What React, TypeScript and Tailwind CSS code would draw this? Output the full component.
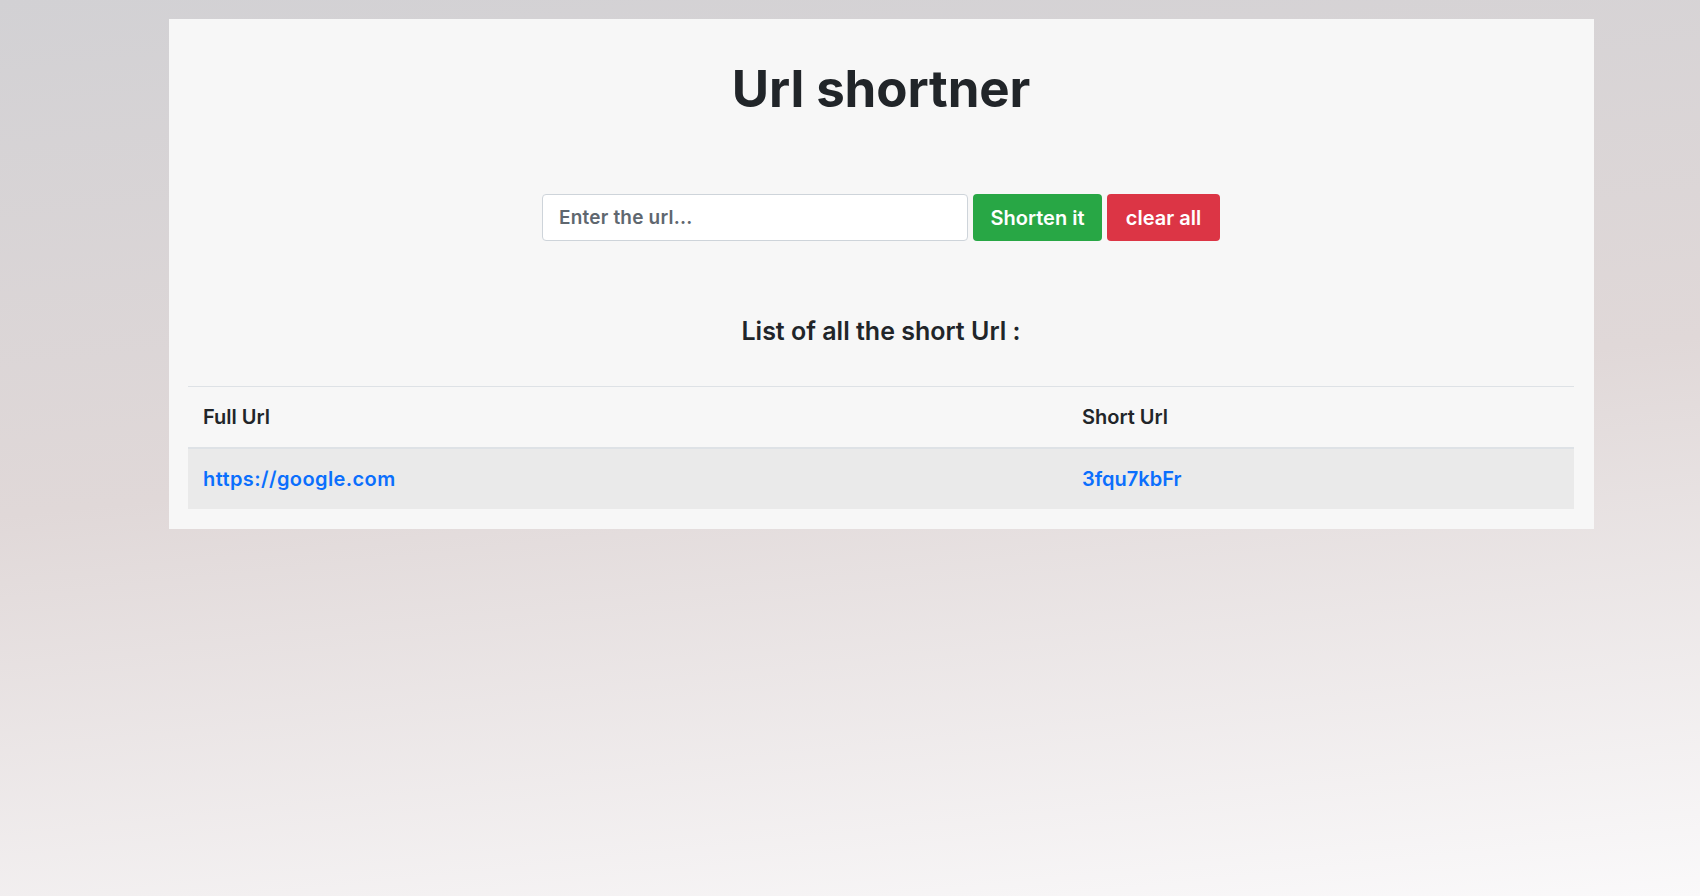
import { useState } from "react";

interface ShortUrl {
    full: string;
    short: string;
}

const initialUrls: ShortUrl[] = [{ full: "https://google.com", short: "3fqu7kbFr" }];

function App() {
    const [value, setValue] = useState("");
    const [urls, setUrls] = useState<ShortUrl[]>(initialUrls);

    return (
        <div className="min-h-screen w-full bg-[linear-gradient(174deg,#d2d1d4_0%,#e0d8d8_48%,#faf9fa_100%)] pt-[19px] font-['Inter','Noto_Sans',sans-serif] text-[#212529]">
            <div className="ml-[169px] w-[1425px] bg-[#f7f7f7] pt-[40px] pl-[19px] pr-5 pb-5">
                <h1 className="text-center text-[51px] leading-[60px] font-bold tracking-[-0.1px]">Url shortner</h1>

                <div className="mt-[75px] flex justify-center gap-[5px]">
                    <input
                        className="h-[47px] w-[426px] rounded-[4px] border border-[#ced4da] bg-white px-4 text-[19px] font-semibold text-[#495057] outline-none placeholder:font-semibold placeholder:tracking-[0.2px] placeholder:text-[#5f676f]"
                        placeholder="Enter the url..."
                        value={value}
                        onChange={(e) => setValue(e.target.value)}
                    />
                    <button className="h-[47px] w-[129px] rounded-[4px] bg-[#28a745] text-[20px] font-semibold text-white">
                        Shorten it
                    </button>
                    <button
                        className="h-[47px] w-[113px] rounded-[4px] bg-[#dc3545] text-[20px] font-semibold text-white"
                        onClick={() => setUrls([])}
                    >
                        clear all
                    </button>
                </div>

                <h3 className="mt-[75px] text-center text-[25px] leading-[31px] font-semibold">List of all the short Url :</h3>

                <table className="mt-[39px] w-full border-collapse text-left text-[20px] leading-[30px]">
                    <thead>
                        <tr className="border-t border-b-2 border-[#dee2e6]">
                            <th className="w-[879px] px-[15px] py-[15px] font-semibold">Full Url</th>
                            <th className="px-[15px] py-[15px] font-semibold">Short Url</th>
                        </tr>
                    </thead>
                    <tbody>
                        {urls.map((u) => (
                            <tr key={u.short} className="bg-[#eaeaea]">
                                <td className="px-[15px] py-[15px] font-semibold text-[#0b6ffd]">
                                    <a href={u.full} className="tracking-[0.4px]">
                                        {u.full}
                                    </a>
                                </td>
                                <td className="px-[15px] py-[15px] font-semibold text-[#0b6ffd]">
                                    <a href={u.short}>{u.short}</a>
                                </td>
                            </tr>
                        ))}
                    </tbody>
                </table>
            </div>
        </div>
    );
}

export default App;
